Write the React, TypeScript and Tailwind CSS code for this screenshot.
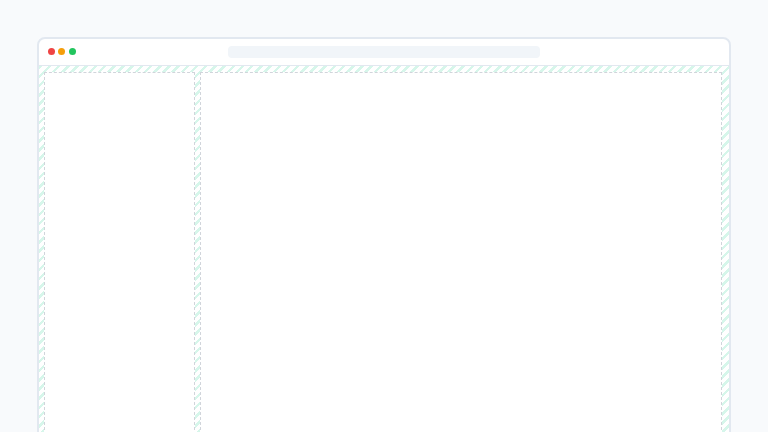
import React from "react";

export default function App() {
  return (
    <div className="h-[432px] w-[768px] overflow-hidden bg-[#f8fafc] pt-[37px] px-[37px]" style={{ fontFamily: '"Liberation Sans", sans-serif' }}>
      <div className="flex h-[420px] flex-col overflow-hidden rounded-t-[8px] border-2 border-[#e2e8f0] bg-white">
        <div className="relative flex h-[27px] shrink-0 items-center border-b border-[#e2e8f0] px-[8.5px] pb-[2px]">
          <div className="flex items-center gap-[3.5px]">
            <span className="h-[7px] w-[7px] rounded-full bg-[#ef4444]" />
            <span className="h-[7px] w-[7px] rounded-full bg-[#f59e0b]" />
            <span className="h-[7px] w-[7px] rounded-full bg-[#22c55e]" />
          </div>
          <div className="ml-[152px] mt-[2px] h-[12px] w-[312px] rounded-[4px] bg-[#f1f5f9]" />
        </div>
        <div className="flex flex-1 gap-[5px] bg-[repeating-linear-gradient(135deg,rgba(52,211,153,0.2)_0px,rgba(52,211,153,0.2)_2.5px,transparent_2.5px,transparent_6.5px)] pl-[5px] pr-[7px] pt-[6px]">
          <div className="w-[151px] shrink-0 border border-dashed border-[#d1d5db] bg-white" />
          <div className="flex-1 border border-dashed border-[#d1d5db] bg-white" />
        </div>
      </div>
    </div>
  );
}
